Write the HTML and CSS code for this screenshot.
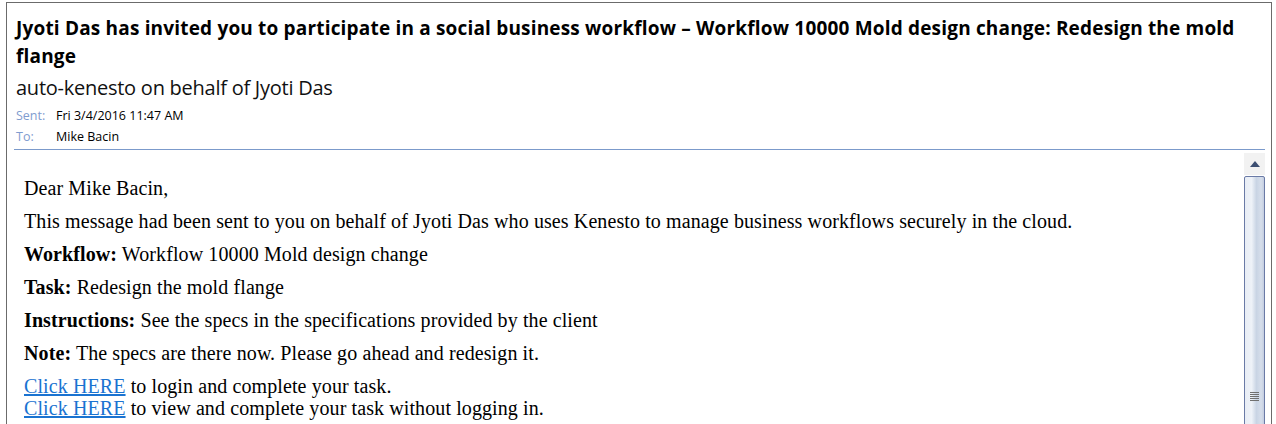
FILE: index.html
```html
<!DOCTYPE html>
<html lang="en">
<head>
    <meta charset="utf-8">
    <title>Workflow invitation</title>
    <link rel="stylesheet" href="styles.css">
</head>
<body>
    <div class="window">
        <header class="mail-head">
            <h1 class="subject">Jyoti Das has invited you to participate in a social business workflow – Workflow 10000 Mold design change: Redesign the mold flange</h1>
            <div class="sender">auto-kenesto on behalf of Jyoti Das</div>
            <ul class="meta">
                <li><span class="label">Sent:</span>Fri 3/4/2016 11:47 AM</li>
                <li><span class="label">To:</span>Mike Bacin</li>
            </ul>
        </header>

        <div class="mail-pane">
            <div class="mail-body">
                <p>Dear Mike Bacin,</p>
                <p>This message had been sent to you on behalf of Jyoti Das who uses Kenesto to manage business workflows securely in the cloud.</p>
                <p><b>Workflow:</b> Workflow 10000 Mold design change</p>
                <p><b>Task:</b> Redesign the mold flange</p>
                <p><b>Instructions:</b> See the specs in the specifications provided by the client</p>
                <p><b>Note:</b> The specs are there now. Please go ahead and redesign it.</p>
                <p class="links">
                    <a href="#">Click HERE</a> to login and complete your task.<br>
                    <a href="#">Click HERE</a> to view and complete your task without logging in.
                </p>
            </div>
            <div class="scrollbar">
                <div class="scroll-btn"><span class="arrow"></span></div>
                <div class="scroll-thumb">
                    <span class="grip"></span>
                </div>
            </div>
        </div>
    </div>
</body>
</html>
```

FILE: styles.css
```css
body {
    margin: 0;
    background-color: white;
    overflow: hidden;
}

.window {
    height: calc(100vh - 3px);
    margin: 2px 4px 0 6px;
    overflow: hidden;

    border: 1px solid #6b6b6b;
    border-bottom: none;
}

.mail-head {
    margin: 0 6px 0 7px;
    padding: 11px 0 2px 2px;

    font-family: "Open Sans", sans-serif;
    border-bottom: 1px solid #7b9acb;
}

.subject {
    margin: 0;
    max-width: 1240px;

    font-size: 19px;
    line-height: 28px;
    letter-spacing: 0.18px;
    color: black;
}

.sender {
    margin-top: 5px;

    font-size: 20px;
    line-height: 26px;
    letter-spacing: -0.25px;
    color: #111;
}

.meta {
    margin: 4px 0 0 0;
    padding: 0;

    list-style-type: none;
    font-size: 12.5px;
    line-height: 21px;
    color: black;
}

.meta .label {
    display: inline-block;
    width: 40px;

    color: #7f9ccf;
}

.mail-pane {
    display: flex;
    margin-right: 6px;
    padding-top: 3px;
}

.mail-body {
    flex: 1;
    padding: 24px 0 0 17px;

    font-family: "Liberation Serif", serif;
    font-size: 20px;
    letter-spacing: 0.1px;
    color: black;
}

.mail-body p {
    margin: 0 0 11px 0;
    line-height: 22px;
}

a {
    color: #1a73d1;
}

.scrollbar {
    display: flex;
    flex-direction: column;
    width: 21px;
}

.scroll-btn {
    display: flex;
    justify-content: center;
    align-items: center;
    height: 22px;

    background-color: #f2f2f2;
}

.arrow {
    width: 0;
    height: 0;

    border-left: 5px solid transparent;
    border-right: 5px solid transparent;
    border-bottom: 6px solid #3d4f72;
}

.scroll-thumb {
    display: flex;
    justify-content: center;
    height: 300px;
    margin-top: 1px;
    padding-top: 215px;
    box-sizing: border-box;

    border: 1px solid #6a7aa6;
    border-radius: 2px;
    background: linear-gradient(to right, #e8edf5 0%, #eef2f8 35%, #c9d4e4 60%, #d6deeb 85%, #c3cde0 100%);
}

.grip {
    width: 9px;
    height: 9px;

    background: repeating-linear-gradient(to bottom, #707070 0, #707070 1px, transparent 1px, transparent 2px);
}
```
